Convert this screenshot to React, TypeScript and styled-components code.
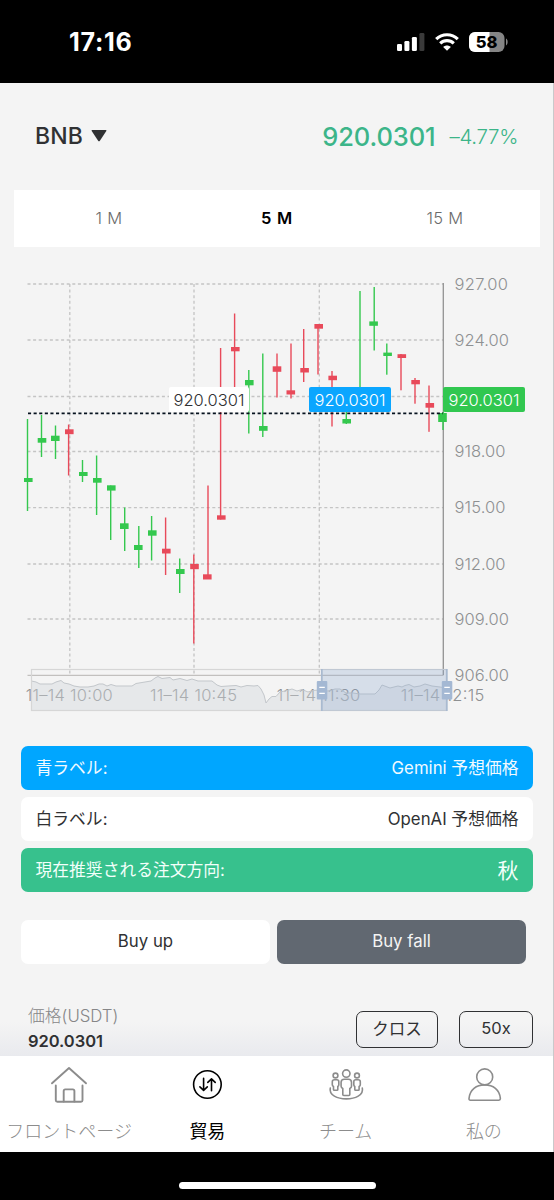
import React from "react";
import styled, { createGlobalStyle } from "styled-components";

const GlobalStyle = createGlobalStyle`
  * { box-sizing: border-box; }
  html, body { margin: 0; padding: 0; background: #000; }
  body { font-family: Inter, "Noto Sans CJK JP", sans-serif; color: #303133; }
  button { font-family: inherit; }
`;

const Phone = styled.div`
  width: 554px;
  height: 1200px;
  display: flex;
  flex-direction: column;
  background: #000;
  overflow: hidden;
`;

const StatusBar = styled.header`
  height: 83px;
  flex: none;
  display: flex;
  align-items: center;
  justify-content: space-between;
  padding: 0 46px 0 69px;
  color: #fff;
`;

const Clock = styled.span`
  font-size: 25px;
  font-weight: 700;
  letter-spacing: 0.7px;
`;

const StatusIcons = styled.div`
  display: flex;
  align-items: center;
  gap: 10px;
`;

const Screen = styled.main`
  flex: none;
  height: 973px;
  background: #f4f4f4;
  border-right: 1px solid #c9c9cb;
  display: flex;
  flex-direction: column;
`;

const PairHeader = styled.section`
  height: 107px;
  flex: none;
  display: flex;
  align-items: center;
  justify-content: space-between;
  padding: 0 35px 1px 35px;
`;

const Pair = styled.div`
  display: flex;
  align-items: center;
  gap: 8px;
  font-size: 23px;
  font-weight: 500;
  letter-spacing: 0.15px;
`;

const Quote = styled.div`
  display: flex;
  align-items: center;
  gap: 14px;
  color: #3cb589;
`;

const QuotePrice = styled.span`
  font-size: 25.5px;
  font-weight: 500;
  letter-spacing: -0.1px;
`;

const QuoteChange = styled.span`
  font-size: 20.5px;
  font-weight: 300;
  letter-spacing: -0.35px;
`;

const Intervals = styled.nav`
  flex: none;
  height: 57px;
  margin: 0 13px 0 14px;
  padding: 0 11px;
  background: #fff;
  display: grid;
  grid-template-columns: repeat(3, 1fr);
`;

const Interval = styled.button<{ $active?: boolean }>`
  border: 0;
  background: none;
  padding: 0 0 2px;
  font-size: 16.5px;
  font-weight: ${(p) => (p.$active ? 600 : 300)};
  letter-spacing: ${(p) => (p.$active ? "0.7px" : "0.3px")};
  color: ${(p) => (p.$active ? "#000" : "#6b6b6b")};
`;

const ChartSvg = styled.svg`
  display: block;
  flex: none;
`;

const Labels = styled.section`
  flex: none;
  display: flex;
  flex-direction: column;
  gap: 7px;
  margin: 0 20px 0 21px;
`;

const LabelRow = styled.div<{ $bg: string; $fg: string }>`
  height: 44px;
  border-radius: 7px;
  padding: 0 14.5px 3px;
  display: flex;
  align-items: center;
  justify-content: space-between;
  background: ${(p) => p.$bg};
  color: ${(p) => p.$fg};
  font-size: 16.8px;
  font-weight: 370;
`;

const Direction = styled.span`
  font-size: 21px;
`;

const Orders = styled.section`
  flex: none;
  display: grid;
  grid-template-columns: 1fr 1fr;
  gap: 7px;
  margin: 27.5px 27px 0 21px;
`;

const OrderButton = styled.button<{ $dark?: boolean }>`
  height: 44px;
  border: 0;
  border-radius: 7px;
  padding: 0 0 2px;
  font-size: 16.8px;
  background: ${(p) => (p.$dark ? "#616871" : "#fff")};
  color: ${(p) => (p.$dark ? "#f4f4f4" : "#303133")};
`;

const PriceBar = styled.section`
  flex: 1;
  min-height: 0;
  padding: 40.5px 20px 0 28px;
  display: flex;
  justify-content: space-between;
  background: linear-gradient(to bottom, #f4f4f4 58px, #e9eaee);
`;

const PriceInfo = styled.div`
  display: flex;
  flex-direction: column;
`;

const PriceName = styled.span`
  font-size: 16.8px;
  line-height: 24px;
  font-weight: 300;
  color: #868688;
`;

const PriceValue = styled.span`
  font-size: 16.5px;
  line-height: 26px;
  font-weight: 600;
  letter-spacing: -0.05px;
`;

const Modes = styled.div`
  display: flex;
  gap: 21px;
  padding-top: 7px;
`;

const ModeButton = styled.button<{ $width: number }>`
  width: ${(p) => p.$width}px;
  height: 37px;
  border: 1.5px solid #303133;
  border-radius: 7px;
  background: transparent;
  padding: 0 0 3px;
  font-size: 16.5px;
  color: #303133;
`;

const TabBar = styled.nav`
  flex: none;
  height: 96px;
  background: #fff;
  border-right: 1px solid #c9c9cb;
  display: grid;
  grid-template-columns: repeat(4, 1fr);
`;

const Tab = styled.button<{ $active?: boolean }>`
  min-width: 0;
  border: 0;
  background: none;
  padding: 8px 0 0;
  display: flex;
  flex-direction: column;
  align-items: center;
  gap: 15px;
  white-space: nowrap;
  font-weight: ${(p) => (p.$active ? 400 : 300)};
  color: ${(p) => (p.$active ? "#000" : "#8c8c8c")};
`;

const TabLabel = styled.span`
  font-size: 18px;
  line-height: 26px;
`;

const HomeArea = styled.footer`
  flex: 1;
  display: flex;
  justify-content: center;
  align-items: flex-start;
  padding-top: 29.5px;
`;

const HomeIndicator = styled.div`
  width: 197px;
  height: 7px;
  border-radius: 4px;
  background: #fff;
`;

const GREEN = "#34c84e";
const RED = "#e84a5a";

type Candle = {
  x: number;
  high: number;
  low: number;
  body?: [left: number, top: number, bottom: number];
  up?: boolean;
};

const candles: Candle[] = [
  { x: 27.5, high: 419, low: 511, body: [24, 478, 482] },
  { x: 41.5, high: 415, low: 457, body: [37.7, 438, 442.7] },
  { x: 55.5, high: 425.5, low: 459, body: [51, 435.7, 441] },
  { x: 68.6, high: 424.5, low: 475.5, body: [65, 429.3, 434.2], up: true },
  { x: 82.5, high: 460, low: 482, body: [79, 472, 476] },
  { x: 96.6, high: 455.5, low: 515, body: [93, 478, 482.7] },
  { x: 110.7, high: 485.5, low: 540, body: [107, 485.3, 490.6] },
  { x: 124.7, high: 507.5, low: 551, body: [120, 523.3, 529] },
  { x: 138.8, high: 526, low: 568, body: [134, 545, 550] },
  { x: 151.6, high: 516, low: 560.5, body: [148, 530.3, 535.7] },
  { x: 165.6, high: 517.5, low: 575, body: [162, 548.7, 553.5], up: true },
  { x: 179.7, high: 558.5, low: 593, body: [176, 569, 574] },
  { x: 193.8, high: 554.5, low: 643.5, body: [190.2, 564, 569.2], up: true },
  { x: 208, high: 485.5, low: 579, body: [203, 574.3, 579.5], up: true },
  { x: 220.6, high: 348, low: 519.5, body: [217, 515.3, 519.7], up: true },
  { x: 234.6, high: 313.5, low: 395, body: [231, 347, 351.3], up: true },
  { x: 248.8, high: 370, low: 433.5, body: [245, 380, 385.3] },
  { x: 262.8, high: 353.5, low: 437, body: [259, 426, 430.8] },
  { x: 277, high: 353.5, low: 397.5, body: [272.7, 366.3, 371.8], up: true },
  { x: 291, high: 343.5, low: 398.5, body: [286.5, 390.3, 394.5], up: true },
  { x: 303.7, high: 329, low: 382, body: [300.3, 368, 372.5], up: true },
  { x: 318, high: 324, low: 374.5, body: [314.4, 324, 328.7], up: true },
  { x: 332, high: 371, low: 426.5, body: [328.4, 375.7, 380.2], up: true },
  { x: 346.3, high: 400, low: 424, body: [342.4, 419, 423.5] },
  { x: 360, high: 291, low: 400 },
  { x: 374.2, high: 287, low: 350.5, body: [369.3, 321.4, 325.8] },
  { x: 386.8, high: 343.5, low: 374.7, body: [383.3, 352.6, 356] },
  { x: 401, high: 354, low: 390.3, body: [397.5, 354.2, 358], up: true },
  { x: 415, high: 378, low: 403.7, body: [411.3, 380, 384.3], up: true },
  { x: 429, high: 385.5, low: 431.8, body: [425.5, 403, 407.7], up: true },
  { x: 443, high: 412, low: 430, body: [438.2, 413, 422] },
];

const priceAxis = [
  { y: 284, label: "927.00", width: 53.5 },
  { y: 340, label: "924.00", width: 54.5 },
  { y: 396.5 },
  { y: 451.5, label: "918.00", width: 51 },
  { y: 507.7, label: "915.00", width: 51 },
  { y: 564, label: "912.00", width: 51 },
  { y: 619, label: "909.00", width: 54.5 },
  { y: 675.3, label: "906.00", width: 54.5 },
];

const timeAxis = [
  { x: 69.8, label: "11–14 10:00" },
  { x: 194, label: "11–14 10:45" },
  { x: 319.3, label: "11–14 11:30" },
  { x: 443.3, label: "11–14 12:15" },
];

const overview =
  "31.5 681 36 682 40 684 46 684 52 684 56 682 61 680.5 64 683 69 684 74 686 80 687 88 687 94 686 99 684 103 684 107 686 111 684.5 116 686 122 686 128 686 132 686 136 683.5 145 682 151 681 155 678 158 676.5 162 678.5 166 678 170 677.5 173 680 180 678.5 187 680.5 192 679 198 681 206 681 212 681 217 685 221 686.5 228 686 236 685.5 241 687 247 685.5 254 686 258 685.5 261 689 264 695 266 703 269 699 272 696.5 276 696.5 280 692 285 691 292 689 297 691 302 689.5 308 692 313 690.5 319 690 328 691 335 689 340 689 346 693 353 693 360 694 375 694 379 690 382 685 386 686.5 390 688 398 686 402 687 405 685.5 409 684.5 414 687 420 686 425 684 432 686 440 687 446.5 688";

const priceTags = [
  { x: 169, y: 387, w: 80, bg: "#ffffff", fg: "#303133", tx: 173.5 },
  { x: 309, y: 387, w: 82, bg: "#0ba6ff", fg: "#ffffff", tx: 314.5 },
  { x: 443, y: 387, w: 82, bg: "#31c750", fg: "#ffffff", tx: 448.5 },
];

function PriceChart() {
  return (
    <ChartSvg width="553" height="499" viewBox="0 247 553 499" fontFamily="Inter, sans-serif">
      <g stroke="#c4c4c4" strokeWidth="1.3" strokeDasharray="3 2.6" fill="none">
        {priceAxis.slice(0, -1).map((p) => (
          <path key={p.y} d={`M27.5 ${p.y}H443`} />
        ))}
        {timeAxis.slice(0, -1).map((t) => (
          <path key={t.x} d={`M${t.x} 284V675`} />
        ))}
      </g>
      <path d="M27.5 675.3H443.5" stroke="#c2c0be" strokeWidth="1.3" />
      <path d="M443.3 283V675" stroke="#929292" strokeWidth="1.3" />
      {candles.map((c) => (
        <g key={c.x} fill={c.up ? RED : GREEN}>
          <rect x={c.x - 0.7} y={c.high} width="1.4" height={c.low - c.high} />
          {c.body && <rect x={c.body[0]} y={c.body[1]} width="8.6" height={c.body[2] - c.body[1]} />}
        </g>
      ))}
      <path d="M28 413.3H443" stroke="#06121f" strokeWidth="1.7" strokeDasharray="3.1 2.5" />
      {priceTags.map((t) => (
        <g key={t.x}>
          <rect x={t.x} y={t.y} width={t.w} height="25" rx="2" fill={t.bg} />
          <text x={t.tx} y="405.6" fontSize="16.5" fontWeight="350" fill={t.fg} textLength="71" lengthAdjust="spacing">
            920.0301
          </text>
        </g>
      ))}
      <g fontSize="16.5" fontWeight="350" fill="#8e9092">
        {priceAxis.map(
          (p) =>
            p.label && (
              <text key={p.label} x="454.5" y={p.y + 5.6} textLength={p.width} lengthAdjust="spacing">
                {p.label}
              </text>
            )
        )}
        {timeAxis.map((t) => (
          <text
            key={t.label}
            x={t.x - (t.x > 300 ? 42.5 : 44)}
            y="700.7"
            textLength={t.x > 300 ? 83.5 : 87}
            lengthAdjust="spacing"
          >
            {t.label}
          </text>
        ))}
      </g>
      <polygon points={`31.5,710.5 ${overview} 446.5,710.5`} fill="#d2d7dc" fillOpacity="0.42" />
      <polyline points={overview} fill="none" stroke="#c3c7cb" strokeWidth="1" />
      <rect x="31.5" y="669.5" width="415" height="41" fill="none" stroke="#d6d6d6" strokeWidth="1.2" />
      <rect x="322" y="669" width="125" height="42" fill="#87a5cd" fillOpacity="0.28" />
      {[321.8, 446.8].map((x) => (
        <g key={x}>
          <path d={`M${x} 669V711`} stroke="#a9bad0" strokeWidth="1.8" />
          <rect x={x - 5} y="681" width="10.5" height="18.5" rx="1" fill="#a4b8d3" />
          <path d={`M${x - 2.5} 687.3h5.5M${x - 2.5} 693.3h5.5`} stroke="#fff" strokeWidth="1.3" />
        </g>
      ))}
    </ChartSvg>
  );
}

function SignalIcon() {
  return (
    <svg width="28" height="18" viewBox="0 0 28 18" fill="#fff">
      <rect x="0" y="11" width="5" height="7" rx="1.3" />
      <rect x="7.4" y="8" width="5" height="10" rx="1.3" />
      <rect x="14.9" y="4" width="5" height="14" rx="1.3" />
      <rect x="22.4" y="0" width="5" height="18" rx="1.3" fill="#3a3a3a" />
    </svg>
  );
}

function WifiIcon() {
  return (
    <svg width="24" height="18" viewBox="0 0 24 18" fill="none" stroke="#fff" strokeWidth="3.1">
      <path d="M1.2 6.2C7.2 0.2 16.8 0.2 22.8 6.2" />
      <path d="M5.2 10.3C9 6.7 15 6.7 18.8 10.3" />
      <path d="M12 17.8 8.2 13.9C10.3 11.9 13.7 11.9 15.8 13.9Z" fill="#fff" stroke="none" />
    </svg>
  );
}

function BatteryIcon() {
  return (
    <svg width="39" height="20" viewBox="0 0 39 20">
      <defs>
        <clipPath id="cell">
          <rect width="35.5" height="20" rx="6" />
        </clipPath>
      </defs>
      <g clipPath="url(#cell)">
        <rect width="36" height="20" fill="#858585" />
        <rect width="20.5" height="20" fill="#fff" />
      </g>
      <path d="M37 6.6c2.2 1.2 2.2 5.6 0 6.8z" fill="#858585" />
      <text x="17.5" y="16" textAnchor="middle" fontSize="16.5" fontWeight="800" fontFamily="Inter, sans-serif" fill="#000">
        58
      </text>
    </svg>
  );
}

const iconProps = {
  width: 40,
  height: 40,
  viewBox: "0 0 40 40",
  fill: "none",
  stroke: "currentColor",
  strokeWidth: 1.6,
  strokeLinecap: "round" as const,
  strokeLinejoin: "round" as const,
};

function HomeIcon() {
  return (
    <svg {...iconProps} strokeWidth={1.9}>
      <path d="M3 19.3 20 4l17 15.3" />
      <path d="M6.8 21.5V36.2q0 1.5 1.5 1.5H32q1.5 0 1.5-1.5V21.5" />
      <path d="M14.7 37.5V27q0-1.6 1.6-1.6h7.5q1.6 0 1.6 1.6v10.5" />
    </svg>
  );
}

function TradeIcon() {
  return (
    <svg {...iconProps}>
      <circle cx="20.4" cy="20.5" r="13.8" />
      <path d="M16.6 14.4V26.3M12.9 22.8l3.7 3.5 3.7-3.5" />
      <path d="M24.5 26.8V14.9M20.8 18.4l3.7-3.5 3.7 3.5" />
    </svg>
  );
}

function TeamIcon() {
  return (
    <svg {...iconProps} strokeWidth={1.6}>
      <circle cx="20.3" cy="9.6" r="3.7" />
      <circle cx="9.5" cy="11.5" r="2.4" />
      <circle cx="31" cy="11.5" r="2.4" />
      <path d="M18.3 15.3h4q3.2 0 3.2 3v4q0 1.5-1.7 2.2v6q0 1-1 1h-5q-1 0-1-1v-6q-1.7-.7-1.7-2.2v-4q0-3 3.2-3z" />
      <path d="M8.5 15.8h2.3q2 0 2 2v3q0 1.2-1 1.7v3q0 .8-.8.8H8.3q-.8 0-.8-.8v-3q-1.200-.5-1.200-1.700v-3q0-2 2.200-2z" />
      <path d="M29.8 15.8h2.300q2.200 0 2.200 2v3q0 1.200-1.200 1.700v3q0 .8-.8.8h-2.700q-.8 0-.8-.8v-3q-1-.5-1-1.700v-3q0-2 2-2z" />
      <path d="M4.300 24C1 38.500 39.600 38.500 36.300 24" />
    </svg>
  );
}

function UserIcon() {
  return (
    <svg {...iconProps}>
      <circle cx="20.7" cy="12.9" r="8" />
      <path d="M5 34.6C5.7 25.5 12.4 20.9 20.7 20.9S35.7 25.5 36.4 34.6Q36.4 36.2 34.9 36.2H6.4Q4.900 36.2 5 34.6Z" />
    </svg>
  );
}

export default function App() {
  return (
    <Phone>
      <GlobalStyle />
      <StatusBar>
        <Clock>17:16</Clock>
        <StatusIcons>
          <SignalIcon />
          <WifiIcon />
          <BatteryIcon />
        </StatusIcons>
      </StatusBar>

      <Screen>
        <PairHeader>
          <Pair>
            BNB
            <svg width="16" height="12" viewBox="0 0 16 12" fill="#303133">
              <path d="M1.2 0h13.6q1 .2.5 1.1L8.9 10.8q-.9 1-1.8 0L.7 1.1Q.2.2 1.2 0z" />
            </svg>
          </Pair>
          <Quote>
            <QuotePrice>920.0301</QuotePrice>
            <QuoteChange>–4.77%</QuoteChange>
          </Quote>
        </PairHeader>

        <Intervals>
          <Interval>1 M</Interval>
          <Interval $active>5 M</Interval>
          <Interval>15 M</Interval>
        </Intervals>

        <PriceChart />

        <Labels>
          <LabelRow $bg="#00a6ff" $fg="#f2faff">
            <span>青ラベル:</span>
            <span>Gemini 予想価格</span>
          </LabelRow>
          <LabelRow $bg="#fff" $fg="#303133">
            <span>白ラベル:</span>
            <span>OpenAI 予想価格</span>
          </LabelRow>
          <LabelRow $bg="#37c18d" $fg="#f2fffa">
            <span>現在推奨される注文方向:</span>
            <Direction>秋</Direction>
          </LabelRow>
        </Labels>

        <Orders>
          <OrderButton>Buy up</OrderButton>
          <OrderButton $dark>Buy fall</OrderButton>
        </Orders>

        <PriceBar>
          <PriceInfo>
            <PriceName>価格(USDT)</PriceName>
            <PriceValue>920.0301</PriceValue>
          </PriceInfo>
          <Modes>
            <ModeButton $width={82}>クロス</ModeButton>
            <ModeButton $width={74}>50x</ModeButton>
          </Modes>
        </PriceBar>
      </Screen>

      <TabBar>
        <Tab>
          <HomeIcon />
          <TabLabel>フロントページ</TabLabel>
        </Tab>
        <Tab $active>
          <TradeIcon />
          <TabLabel>貿易</TabLabel>
        </Tab>
        <Tab>
          <TeamIcon />
          <TabLabel>チーム</TabLabel>
        </Tab>
        <Tab>
          <UserIcon />
          <TabLabel>私の</TabLabel>
        </Tab>
      </TabBar>

      <HomeArea>
        <HomeIndicator />
      </HomeArea>
    </Phone>
  );
}
